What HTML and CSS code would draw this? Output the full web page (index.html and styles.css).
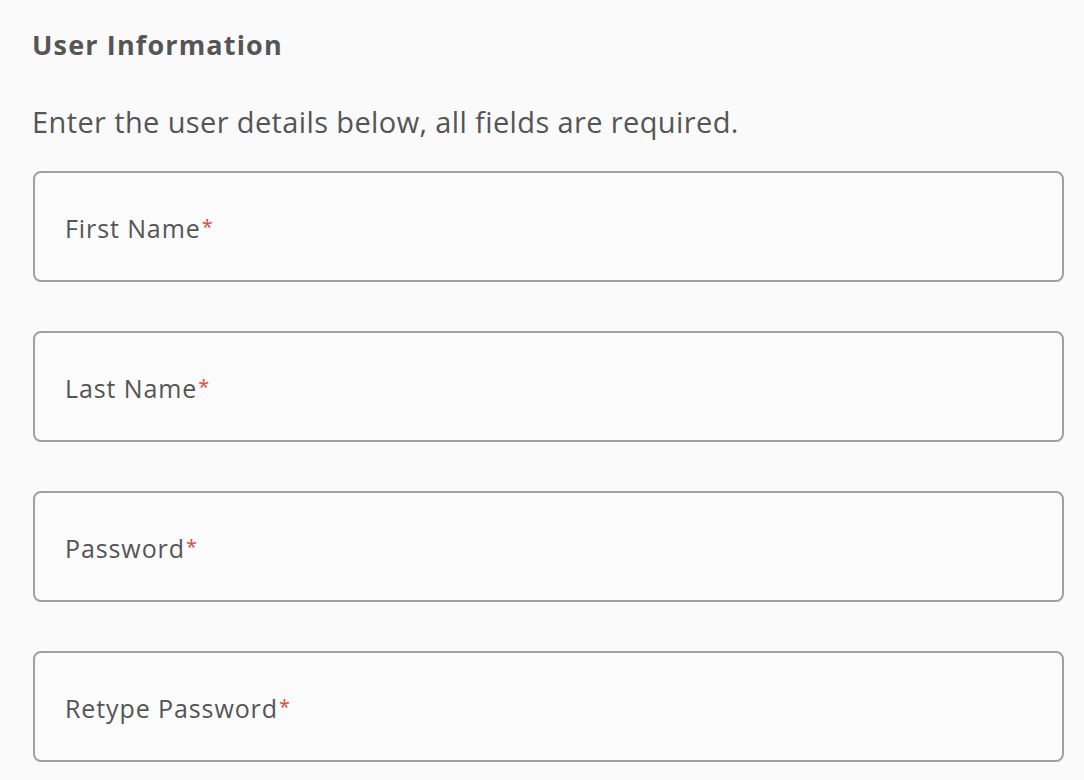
FILE: index.html
```html
<!DOCTYPE html>
<html lang="en">
<head>
<meta charset="utf-8">
<title>User Information</title>
<link rel="stylesheet" href="styles.css">
</head>
<body>
<main class="form">
  <h2 class="title">User Information</h2>
  <p class="intro">Enter the user details below, all fields are required.</p>
  <div class="fields">
    <label class="field"><span class="label">First Name<span class="req">*</span></span></label>
    <label class="field"><span class="label">Last Name<span class="req">*</span></span></label>
    <label class="field"><span class="label">Password<span class="req">*</span></span></label>
    <label class="field"><span class="label">Retype Password<span class="req">*</span></span></label>
  </div>
</main>
</body>
</html>
```
FILE: styles.css
```css
html, body {
  margin: 0;
  padding: 0;
  background: #fafafa;
}
body {
  font-family: "Open Sans", Lato, sans-serif;
  color: #555555;
  font-variant-ligatures: none;
}
.form {
  padding: 26px 20px 0 32px;
}
.title {
  margin: 0;
  font-size: 27px;
  font-weight: 700;
  line-height: 38px;
  letter-spacing: 1.15px;
  color: #555555;
}
.intro {
  margin: 38px 0 0 0;
  font-size: 29px;
  line-height: 40px;
  letter-spacing: 0.38px;
  color: #555555;
}
.fields {
  margin-top: 29px;
  display: flex;
  flex-direction: column;
  gap: 49px;
}
.field {
  display: flex;
  align-items: center;
  height: 111px;
  box-sizing: border-box;
  border: 2px solid #a0a0a0;
  border-radius: 8px;
  margin-left: 1px;
  padding: 2px 30px 0 30px;
  background: #fbfbfb;
}
.label {
  font-size: 25px;
  letter-spacing: 0.9px;
  color: #555555;
}
.req {
  color: #e8463a;
  font-size: 20px;
  vertical-align: 4px;
  margin-left: 1px;
  letter-spacing: 0;
}
```
